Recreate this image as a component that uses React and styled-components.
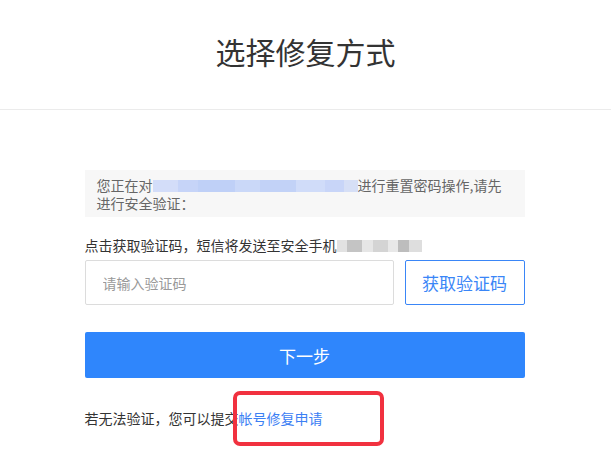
import React from "react";
import styled, { createGlobalStyle } from "styled-components";

const GlobalStyle = createGlobalStyle`
  html, body {
    margin: 0;
    padding: 0;
    background: #fff;
  }
  body {
    font-family: "Noto Sans CJK SC", "Noto Sans", "Liberation Sans", sans-serif;
    color: #333;
  }
`;

const Page = styled.div`
  min-height: 475px;
`;

const Header = styled.header`
  padding: 31px 0 38px;
  border-bottom: 1px solid #ebebeb;
  text-align: center;
`;

const Title = styled.h1`
  margin: 0;
  font-size: 30px;
  line-height: 40px;
  font-weight: 400;
  color: #333;
`;

const Main = styled.main`
  width: 440px;
  margin: 0 auto;
  padding: 60px 0 40px;
  position: relative;
  left: -1px;
`;

const Notice = styled.div`
  background: #f7f7f7;
  padding: 6px 12px 5px;
  font-size: 14px;
  line-height: 18px;
  color: #666;
`;

const Masked = styled.span`
  display: inline-block;
  vertical-align: middle;
  width: ${(p) => p.$w}px;
  height: ${(p) => p.$h}px;
  margin-top: -2px;
  background: ${(p) => p.$bg};
  filter: blur(0.6px);
`;

const Label = styled.p`
  margin: 18px 0 5px;
  font-size: 14px;
  line-height: 20px;
  color: #333;
`;

const CodeRow = styled.div`
  display: flex;
  gap: 11px;
`;

const CodeInput = styled.input`
  flex: 1;
  min-width: 0;
  height: 45px;
  box-sizing: border-box;
  border: 1px solid #dcdcdc;
  border-radius: 2px;
  padding: 0 17px;
  font-family: inherit;
  font-size: 14px;
  color: #333;
  outline: none;
  &::placeholder {
    color: #999;
  }
`;

const SendButton = styled.button`
  width: 120px;
  height: 45px;
  box-sizing: border-box;
  border: 1px solid #3a86f7;
  border-radius: 2px;
  background: #fff;
  color: #3a86f7;
  font-family: inherit;
  font-size: 17px;
  cursor: pointer;
`;

const NextButton = styled.button`
  display: block;
  width: 100%;
  height: 46px;
  margin-top: 27px;
  border: 0;
  border-radius: 2px;
  background: #2f86fc;
  color: #fff;
  font-family: inherit;
  font-size: 17px;
  cursor: pointer;
`;

const Footer = styled.p`
  position: relative;
  margin: 30px 0 0;
  font-size: 14px;
  line-height: 20px;
  color: #333;
`;

const RepairLink = styled.a`
  color: #3b80f4;
  text-decoration: none;
`;

const Highlight = styled.span`
  position: absolute;
  left: 148px;
  top: -17px;
  width: 151px;
  height: 55px;
  box-sizing: border-box;
  border: 4px solid #f1313f;
  border-radius: 7px;
  pointer-events: none;
`;

const blueMask =
  "linear-gradient(90deg, #d3ddf9 0 12%, #c6d4f8 12% 22%, #bfd0f7 22% 40%, #cad8f8 40% 52%, #c2d2f7 52% 70%, #d0dcf9 70% 84%, #c8d5f8 84% 93%, #d6dff6 93% 100%)";
const grayMask =
  "linear-gradient(90deg, #e2e2e2 0 12%, #c4c4c4 12% 30%, #e6e6e6 30% 42%, #d4d4d4 42% 60%, #e8e8e8 60% 72%, #bdbdbd 72% 85%, #dedede 85% 100%)";

export default function App() {
  return (
    <Page>
      <GlobalStyle />
      <Header>
        <Title>选择修复方式</Title>
      </Header>
      <Main>
        <Notice>
          您正在对<Masked $w={205} $h={12} $bg={blueMask} />进行重置密码操作,请先
          <br />
          进行安全验证：
        </Notice>
        <Label>
          点击获取验证码，短信将发送至安全手机
          <Masked $w={85} $h={12} $bg={grayMask} />
        </Label>
        <CodeRow>
          <CodeInput placeholder="请输入验证码" />
          <SendButton type="button">获取验证码</SendButton>
        </CodeRow>
        <NextButton type="button">下一步</NextButton>
        <Footer>
          若无法验证，您可以提交<RepairLink href="#">帐号修复申请</RepairLink>
          <Highlight />
        </Footer>
      </Main>
    </Page>
  );
}
